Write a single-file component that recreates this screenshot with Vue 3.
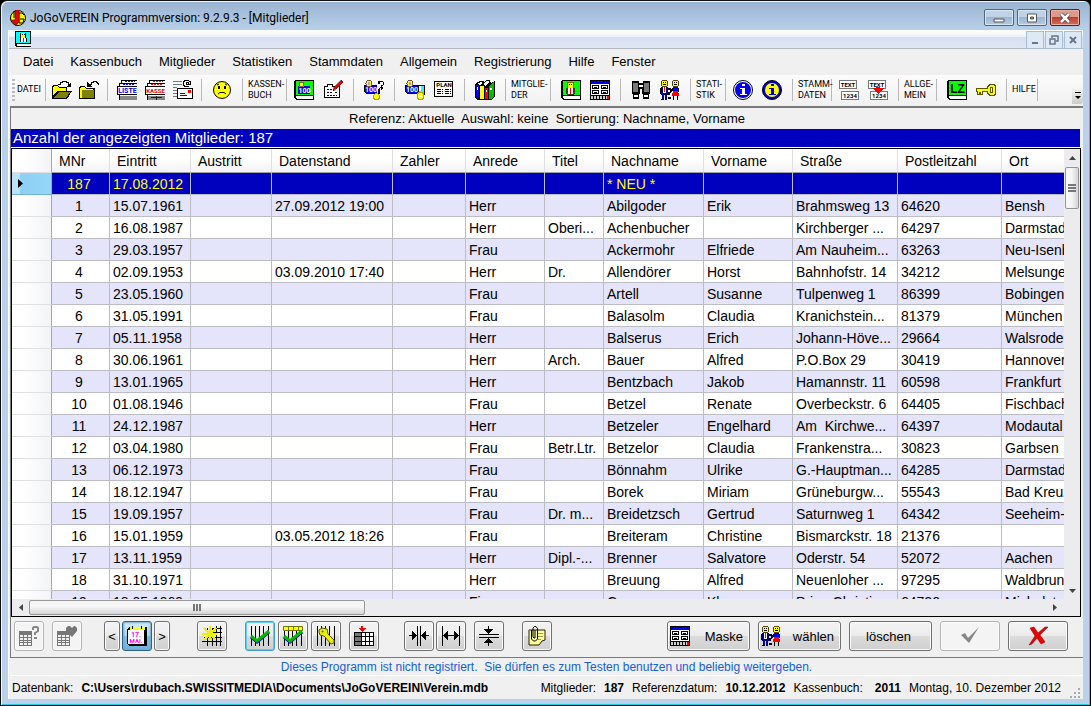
<script setup>
const menus = ['Datei', 'Kassenbuch', 'Mitglieder', 'Statistiken', 'Stammdaten', 'Allgemein', 'Registrierung', 'Hilfe', 'Fenster']

// Toolbar sections, each followed by a divider; width and pitch are in pixels
const tools = [
  { label: ['DATEI'], width: 30, tight: true },
  { icons: ['open', 'close'], width: 61, pitch: 27, tight: true },
  { icons: ['liste', 'kasse', 'mail'], width: 93, pitch: 28 },
  { icons: ['smiley'], width: 40 },
  { label: ['KASSEN-', 'BUCH'], width: 43 },
  { icons: ['cashbook', 'pen'], width: 66, tight: true },
  { icons: ['cashquery'], width: 40 },
  { icons: ['cashcar', 'plan'], width: 69 },
  { icons: ['books'], width: 40 },
  { label: ['MITGLIE-', 'DER'], width: 44 },
  { icons: ['member', 'mask'], width: 69 },
  { icons: ['binoculars', 'people'], width: 69 },
  { label: ['STATI-', 'STIK'], width: 34 },
  { icons: ['info', 'infoyellow'], width: 66, tight: true },
  { label: ['STAMM-', 'DATEN'], width: 38 },
  { icons: ['textnum', 'textarrow'], width: 66, tight: true },
  { label: ['ALLGE-', 'MEIN'], width: 37 },
  { icons: ['lz', 'key'], width: 69 },
  { label: ['HILFE'], width: 30 },
]

const columns = [
  { name: 'MNr', width: 58 },
  { name: 'Eintritt', width: 81 },
  { name: 'Austritt', width: 81 },
  { name: 'Datenstand', width: 121 },
  { name: 'Zahler', width: 73 },
  { name: 'Anrede', width: 79 },
  { name: 'Titel', width: 59 },
  { name: 'Nachname', width: 100 },
  { name: 'Vorname', width: 89 },
  { name: 'Straße', width: 105 },
  { name: 'Postleitzahl', width: 104 },
  { name: 'Ort', width: 120 },
]
const tableWidth = 40 + columns.reduce((sum, c) => sum + c.width, 0)

const rows = [
  ['187', '17.08.2012', '', '', '', '', '', '* NEU *', '', '', '', ''],
  ['1', '15.07.1961', '', '27.09.2012 19:00', '', 'Herr', '', 'Abilgoder', 'Erik', 'Brahmsweg 13', '64620', 'Bensh'],
  ['2', '16.08.1987', '', '', '', 'Herr', 'Oberi...', 'Achenbucher', '', 'Kirchberger ...', '64297', 'Darmstadt'],
  ['3', '29.03.1957', '', '', '', 'Frau', '', 'Ackermohr', 'Elfriede', 'Am Nauheim...', '63263', 'Neu-Isenburg'],
  ['4', '02.09.1953', '', '03.09.2010 17:40', '', 'Herr', 'Dr.', 'Allendörer', 'Horst', 'Bahnhofstr. 14', '34212', 'Melsungen'],
  ['5', '23.05.1960', '', '', '', 'Frau', '', 'Artell', 'Susanne', 'Tulpenweg 1', '86399', 'Bobingen'],
  ['6', '31.05.1991', '', '', '', 'Frau', '', 'Balasolm', 'Claudia', 'Kranichstein...', '81379', 'München'],
  ['7', '05.11.1958', '', '', '', 'Herr', '', 'Balserus', 'Erich', 'Johann-Höve...', '29664', 'Walsrode'],
  ['8', '30.06.1961', '', '', '', 'Herr', 'Arch.', 'Bauer', 'Alfred', 'P.O.Box 29', '30419', 'Hannover'],
  ['9', '13.01.1965', '', '', '', 'Herr', '', 'Bentzbach', 'Jakob', 'Hamannstr. 11', '60598', 'Frankfurt'],
  ['10', '01.08.1946', '', '', '', 'Frau', '', 'Betzel', 'Renate', 'Overbeckstr. 6', '64405', 'Fischbach'],
  ['11', '24.12.1987', '', '', '', 'Herr', '', 'Betzeler', 'Engelhard', 'Am  Kirchwe...', '64397', 'Modautal'],
  ['12', '03.04.1980', '', '', '', 'Frau', 'Betr.Ltr.', 'Betzelor', 'Claudia', 'Frankenstra...', '30823', 'Garbsen'],
  ['13', '06.12.1973', '', '', '', 'Frau', '', 'Bönnahm', 'Ulrike', 'G.-Hauptman...', '64285', 'Darmstadt'],
  ['14', '18.12.1947', '', '', '', 'Frau', '', 'Borek', 'Miriam', 'Grüneburgw...', '55543', 'Bad Kreuznach'],
  ['15', '19.09.1957', '', '', '', 'Frau', 'Dr. m...', 'Breidetzsch', 'Gertrud', 'Saturnweg 1', '64342', 'Seeheim-Jug.'],
  ['16', '15.01.1959', '', '03.05.2012 18:26', '', 'Frau', '', 'Breiteram', 'Christine', 'Bismarckstr. 18', '21376', ''],
  ['17', '13.11.1959', '', '', '', 'Herr', 'Dipl.-...', 'Brenner', 'Salvatore', 'Oderstr. 54', '52072', 'Aachen'],
  ['18', '31.10.1971', '', '', '', 'Herr', '', 'Breuung', 'Alfred', 'Neuenloher ...', '97295', 'Waldbrunn'],
  ['19', '18.05.1969', '', '', '', 'Firma', '', 'Canser', 'Klaus', 'Prinz-Christi...', '64720', 'Michelstadt'],
]

const gridTools = [
  ['star'],
  ['gridcheck', 'gridhead', 'gridkey'],
  ['gridrow'],
  ['narrow', 'wide'],
  ['rowheight'],
  ['clip'],
]
</script>

<template>
  <svg class="defs" aria-hidden="true">
    <symbol id="logo" viewBox="0 0 16 16">
      <circle cx="8" cy="8" r="7.500" fill="#ff0" stroke="#000" />
      <path d="M14 5l-2-2H9v10h4l1-4h-4" fill="none" stroke="#000" />
      <path d="M4 1v7" stroke="#000" />
      <path d="M5 0h4v11l-3 5-5-6h4z" fill="#e00" stroke="#300" stroke-width=".5" />
    </symbol>
    <symbol id="mdi" viewBox="0 0 16 16" shape-rendering="crispEdges">
      <path d="M0 0h16v13H2v2h14v1H1l-1-1z" fill="#000" />
      <path d="M1 1h14v11H1z" fill="#0ff" />
      <path d="M2 13h13v2H2z" fill="#fff" />
      <path d="M5 2h6v5H5zM5 7h7v4H5z" fill="#000" />
      <path d="M6 2h4v5H6z" fill="#ff0" />
      <path d="M7 3h1v1H7zM9 3h1v1H9z" fill="#000" />
      <path d="M6 7h5v4H6z" fill="#fff" />
      <path d="M8 7h1v4H8z" fill="#f00" />
    </symbol>
    <symbol id="open" viewBox="0 0 20 20" shape-rendering="crispEdges">
      <path d="M0 19V6l1-1h4l2 2h8v4h5l-5 8z" fill="#000" />
      <path d="M1 16V7l1-1h3l2 2h7v3H5z" fill="#ff0" />
      <path d="M2 18l5-6h11l-4 6z" fill="#808000" />
      <path d="M6 4.500h2v-2h2v-1h4v1h2v2" fill="none" stroke="#000" />
      <path d="M19 2v5h-5z" fill="#000" />
    </symbol>
    <symbol id="close" viewBox="0 0 20 20" shape-rendering="crispEdges">
      <path d="M0 19V7l1-1h4l2 2h9v11z" fill="#000" />
      <path d="M1 18V8l1-1h3l2 2h7v1H3v8z" fill="#ff0" />
      <path d="M3 10h12v8H3z" fill="#808000" />
      <path d="M11 4.500h1v-2h2v-1h3v1h1v1h1v1" fill="none" stroke="#000" />
      <path d="M8 2v5h5z" fill="#000" />
    </symbol>
    <symbol id="sheets" viewBox="0 0 20 20" shape-rendering="crispEdges">
      <path d="M4 0h16v8H4zM2 3h18v8H2zM0 6h20v9H0z" fill="#000" />
      <path d="M5 1h15v2H5zM3 4h17v2H3zM1 7h19v7H1z" fill="#fff" />
      <path d="M2 15h1v5H2z" fill="#000" /><path d="M3 16h17v4H3z" fill="#888" />
    </symbol>
    <symbol id="liste" viewBox="0 0 20 20" shape-rendering="crispEdges">
      <use href="#sheets" />
      <path d="M8 1.500h10M6 4.500h12" stroke="#00f" stroke-dasharray="2 1" />
      <text x="10.5" y="13" text-anchor="middle" fill="#00e" font-family="Roboto" font-size="7" font-weight="700">LISTE</text>
    </symbol>
    <symbol id="kasse" viewBox="0 0 20 20" shape-rendering="crispEdges">
      <use href="#sheets" />
      <path d="M8 1.500h10M6 4.500h12" stroke="#f00" stroke-dasharray="2 1" />
      <path d="M11.500 16v4M6 17.500h11" stroke="#222" />
      <text x="10.5" y="13" text-anchor="middle" fill="#e00" font-family="Roboto" font-size="6" font-weight="700">KASSE</text>
    </symbol>
    <symbol id="mail" viewBox="0 0 20 20" shape-rendering="crispEdges">
      <path d="M0 1.500h9M0 4.500h9M0 7.500h4M0 10.500h4M0 13.500h4M0 16.500h4" stroke="#777" />
      <path d="M4.500 8.500h15v10h-15z" fill="#fff" stroke="#000" />
      <path d="M15 10h3v3h-3z" fill="#f00" />
      <path d="M7 13.500h5M7 15.500h7" stroke="#00f" />
      <path d="M16 6.500h-4l-1.500-1.500V2L12 .500h3.500L17.500 2v2.500h-2V2.500h-2v2h2" fill="none" stroke="#000" />
    </symbol>
    <symbol id="smiley" viewBox="0 0 20 20">
      <circle cx="10" cy="10" r="8.500" fill="#ff0" stroke="#000" />
      <path d="M6 6h2v3H6zM12 6h2v3h-2z" fill="#000" />
      <path d="M6 14l2-1.500h4l2 1.500" fill="none" stroke="#000" />
      <path d="M5 5l2-1M13 4l2 1" stroke="#000" />
    </symbol>
    <symbol id="cashbook" viewBox="0 0 20 20" shape-rendering="crispEdges">
      <path d="M1 0h19v20H2l-2-2V1z" fill="#000" />
      <path d="M2 1h17v14H2z" fill="#0f0" /><path d="M2 16h17v3H3z" fill="#fff" />
      <path d="M4 6h12v8H4z" fill="#00d" /><path d="M5 2h4v4H5z" fill="#ff0" stroke="#863" />
      <text x="10.500" y="13" text-anchor="middle" fill="#fff" font-family="Roboto" font-size="7" font-weight="700">100</text>
    </symbol>
    <symbol id="pen" viewBox="0 0 20 20" shape-rendering="crispEdges">
      <path d="M1.500 6.500h3v-2h5v2h7v11h-15z" fill="#fff" stroke="#000" />
      <path d="M4 9.500h6M4 12.500h5M4 15.500h10M12 12.500h3" stroke="#000" stroke-dasharray="2 1" />
      <path d="M10 11l1-4 7-7 2 2-7 7z" fill="#e00" stroke="#400" stroke-width=".5" />
    </symbol>
    <symbol id="coach" viewBox="0 0 20 20" shape-rendering="crispEdges">
      <path d="M0 5h13v9H2l-2-2z" fill="#000" /><path d="M1 6h12v7H2l-1-1z" fill="#00e" />
      <circle cx="5" cy="3.500" r="3" fill="#ff0" stroke="#752" />
      <path d="M4 2h2v3H4z" fill="#aaa" />
      <text x="7" y="12" text-anchor="middle" fill="#fff" font-family="Roboto" font-size="7" font-weight="700">100</text>
    </symbol>
    <symbol id="cashquery" viewBox="0 0 20 20" shape-rendering="crispEdges">
      <use href="#coach" />
      <circle cx="12.500" cy="16.500" r="3" fill="#ff0" stroke="#aa0" />
      <path d="M14 1h4l2 2v2l-3 2h2v2l-3 2v3h-2V9l3-2V5l1-1-1-1h-1v1h-2z" fill="#000" />
      <path d="M16 2.500h2v2M16 7.500v3" fill="none" stroke="#fff" />
    </symbol>
    <symbol id="cashcar" viewBox="0 0 20 20" shape-rendering="crispEdges">
      <use href="#coach" />
      <path d="M13 5h7v10h-7z" fill="#000" /><path d="M14 6h5v8h-5z" fill="#3ef" />
      <path d="M14 6h2v5h-2z" fill="#fff" />
      <circle cx="15.500" cy="16" r="3.500" fill="#ff0" stroke="#aa0" />
      <circle cx="15.500" cy="16" r="1.500" fill="#fff" />
    </symbol>
    <symbol id="plan" viewBox="0 0 20 20" shape-rendering="crispEdges">
      <path d="M.5 1.500h18v15H.5z" fill="#fff" stroke="#000" />
      <text x="10" y="7" text-anchor="middle" fill="#000" font-family="Roboto" font-size="6" font-weight="700">PLAN</text>
      <path d="M3 9.500h6M3 11.500h6M3 13.500h6M11 9.500h6M11 11.500h6M11 13.500h6" stroke="#000" stroke-dasharray="4 1" />
    </symbol>
    <symbol id="books" viewBox="0 0 20 20" shape-rendering="crispEdges">
      <path d="M0 4l5-3h3l1 1 3-2h3l1 3 4-2v15l-4 4H2l-2-2z" fill="#000" />
      <path d="M2 4l4-2 2 1-3 2zM8 4l4-3h2v2l-4 3z" fill="#fff" />
      <path d="M1 5h3v13H2l-1-1z" fill="#00e" /><path d="M5 6h4v13H5z" fill="#ff0" />
      <path d="M10 8h3v11h-3z" fill="#f00" /><path d="M14 6l5-4v14l-3 3h-2z" fill="#0b0" />
      <path d="M6 8h1v3H6zM11 10h1v2h-1zM15 8h2v2h-2zM2 7h1v3H2z" fill="#fff" />
    </symbol>
    <symbol id="member" viewBox="0 0 20 20" shape-rendering="crispEdges">
      <path d="M1 0h19v20H2l-2-2V1z" fill="#000" />
      <path d="M2 1h17v14H2z" fill="#0f0" /><path d="M2 16h17v3H3z" fill="#fff" />
      <path d="M6 2h7v6H6z" fill="#860" /><path d="M7 3h5v5H7z" fill="#ff0" />
      <path d="M8 4h1v1H8zM10 4h1v1h-1z" fill="#000" />
      <path d="M5 8h9v6h-1v1H6v-1H5z" fill="#532" /><path d="M7 8h5v6H7z" fill="#fff" /><path d="M9 8h1v6H9z" fill="#f00" />
    </symbol>
    <symbol id="mask" viewBox="0 0 20 20" shape-rendering="crispEdges">
      <path d="M0 0h20v20H0z" fill="#000" /><path d="M1 1h18v3H1z" fill="#00e" /><path d="M1 4h18v11H1z" fill="#fff" />
      <path d="M2.500 5.500h6v3h-6zM11.500 5.500h6v3h-6zM2.500 10.500h6v3h-6zM11.500 10.500h6v3h-6z" fill="#fff" stroke="#000" />
      <path d="M4 7.500h3M13 7.500h3M4 12.500h3M13 12.500h3" stroke="#000" />
      <path d="M1 17.500h17" stroke="#ccc" stroke-width="3" stroke-dasharray="2 1" /><path d="M17 16h2v3h-2z" fill="#f00" />
    </symbol>
    <symbol id="binoculars" viewBox="0 0 20 20" shape-rendering="crispEdges">
      <path d="M1 1h7v2h4V1h7v13h-8V9H9v5H1z" fill="#000" />
      <path d="M2 3h5v9H2zM13 3h5v9h-5z" fill="#777" /><path d="M8 5h4v2H8z" fill="#fff" />
      <path d="M2.500 14.500h5v3h-5zM12.500 14.500h5v3h-5z" fill="#fff" stroke="#000" />
      <path d="M2 18.500h6M12 18.500h6" stroke="#000" />
    </symbol>
    <symbol id="people" viewBox="0 0 20 20" shape-rendering="crispEdges">
      <path d="M2 0h5v1h1v5H7v1H2V6H1V1h1zM13 0h5v1h1v5h-1v1h-5V6h-1V1h1z" fill="#540" />
      <path d="M2 1h5v5H2zM13 1h5v5h-5z" fill="#ff0" />
      <path d="M3 2h1v1H3zM5 2h1v1H5zM14 2h1v1h-1zM16 2h1v1h-1zM3 4h3v1H3zM14 4h3v1h-3z" fill="#000" />
      <path d="M1 7h7v8H7v5H5v-5H4v5H2v-5H1z" fill="#008" />
      <path d="M3 7h3v6H3z" fill="#fff" /><path d="M4 7h1v5H4z" fill="#f00" />
      <path d="M0 8h1v6H0zM1 19h3v1H1z" fill="#000" />
      <path d="M13 7h5v4h-5z" fill="#00e" /><path d="M13 11h5v2h1v3h-7v-3h1z" fill="#f00" />
      <path d="M12 8h1v3h-1zM18 8h1v4h-1zM13 16h1v4h-1zM17 16h1v4h-1z" fill="#000" />
      <path d="M8 8h3v1h1v3h-1v1h-1v2H8v-3h2v-2H8zM8 17h3v2H8z" fill="#000" />
    </symbol>
    <symbol id="info" viewBox="0 0 20 20">
      <circle cx="10" cy="10" r="9.500" fill="#fff" stroke="#000" /><circle cx="10" cy="10" r="8" fill="#00e" />
      <path d="M9 4h3v2H9zM7 8h5v6h2v1H7v-1h2V9H7z" fill="#fff" />
    </symbol>
    <symbol id="infoyellow" viewBox="0 0 20 20">
      <circle cx="10" cy="10" r="9.500" fill="#00c" stroke="#000" />
      <circle cx="10" cy="10" r="7" fill="#ff0" />
      <path d="M9 4h3v2H9zM7 8h5v6h2v1H7v-1h2V9H7z" fill="#00d" />
    </symbol>
    <symbol id="textnum" viewBox="0 0 20 20" shape-rendering="crispEdges">
      <path d="M.5.500h17v8H.5zM2.500 11.500h17v8h-17z" fill="#fff" stroke="#777" />
      <text x="9" y="7" text-anchor="middle" fill="#000" font-family="Roboto" font-size="6" font-weight="700">TEXT</text>
      <text x="11" y="18" text-anchor="middle" fill="#000" font-family="Roboto" font-size="6" font-weight="700">1234</text>
    </symbol>
    <symbol id="textarrow" viewBox="0 0 20 20" shape-rendering="crispEdges">
      <use href="#textnum" />
      <path d="M8 7h4v1h4l-6 6-6-6h4z" fill="#f00" />
    </symbol>
    <symbol id="lz" viewBox="0 0 20 20" shape-rendering="crispEdges">
      <path d="M1 0h19v20H2l-2-2V1z" fill="#000" />
      <path d="M2 1h17v14H2z" fill="#0f0" /><path d="M2 16h17v3H3z" fill="#fff" />
      <text x="10.500" y="13" text-anchor="middle" fill="#000" font-family="Liberation Sans" font-size="12" font-weight="700">LZ</text>
    </symbol>
    <symbol id="key" viewBox="0 0 20 20" shape-rendering="crispEdges">
      <path d="M0 8h11V6l2-2h5l2 2v8l-2 2h-5l-2-2v-2H7v3H1v-3H0z" fill="#550" />
      <path d="M1 9h11V7l2-2h3l2 2v6l-2 2h-3l-2-2v-2H6v3H5v-2H3v2H2v-3H1z" fill="#ff0" />
      <path d="M14 7h3v6h-3z" fill="#550" /><path d="M15 8h1v4h-1z" fill="#fff" />
    </symbol>
    <symbol id="sheet" viewBox="0 0 20 20" shape-rendering="crispEdges">
      <path d="M0 5h13v15H0z" fill="#777" />
      <path d="M1 9h3v2H1zM5 9h3v2H5zM9 9h3v2H9zM1 12h3v2H1zM5 12h3v2H5zM9 12h3v2H9zM1 15h3v1H1zM5 15h3v1H5zM9 15h3v1H9zM1 17h3v2H1zM5 17h3v2H5zM9 17h3v2H9z" fill="#f0f0f0" />
    </symbol>
    <symbol id="tablequery" viewBox="0 0 20 20">
      <use href="#sheet" />
      <path d="M14 4V2l1-1h3l1 1v3l-3 2v2M15 12h3" fill="none" stroke="#888" stroke-width="2" />
    </symbol>
    <symbol id="tableheart" viewBox="0 0 20 20">
      <use href="#sheet" />
      <path d="M15 11L9 5V2l2-2h2l2 2 2-2h1l2 2v3z" fill="#777" />
    </symbol>
    <symbol id="calendar" viewBox="0 0 20 20" shape-rendering="crispEdges">
      <path d="M2 1h18v19H2l-2-2V3z" fill="#000" /><path d="M1 4h16v14H1z" fill="#fff" /><path d="M3 1h15v3H3z" fill="#ff0" />
      <path d="M5.500 0v3M14.500 0v3" stroke="#000" />
      <text x="9" y="11" text-anchor="middle" fill="#f0f" font-family="Roboto" font-size="7" font-weight="700">17.</text>
      <text x="9" y="17" text-anchor="middle" fill="#f0f" font-family="Roboto" font-size="6" font-weight="700">MAI.</text>
    </symbol>
    <symbol id="star" viewBox="0 0 20 20" shape-rendering="crispEdges">
      <path d="M5.500 2v18M10.500 2v18M14.500 0v20M18.500 0v20M10 2.500h10M10 6.500h10M2 11.500h18M0 15.500h20" stroke="#000" />
      <path d="M8 0v15M0 7.500h15M2 2l12 12M14 2L2 14" stroke="#ee0" stroke-width="2" />
    </symbol>
    <symbol id="bars" viewBox="0 0 20 20" shape-rendering="crispEdges">
      <path d="M1.500 0v20M5.500 0v20M9.500 0v20M13.500 0v20M18.500 0v20" stroke="#000" />
    </symbol>
    <symbol id="tick" viewBox="0 0 20 20">
      <path d="M1 11l6 5L19 6" fill="none" stroke="#00c" stroke-width="3" />
      <path d="M1 10l6 5L19 5" fill="none" stroke="#0b0" stroke-width="3" />
    </symbol>
    <symbol id="gridcheck" viewBox="0 0 20 20"><use href="#bars" /><use href="#tick" /></symbol>
    <symbol id="gridhead" viewBox="0 0 20 20">
      <use href="#bars" /><path d="M.5.500h19v4H.5z" fill="#ff0" stroke="#770" /><path d="M5.500 0v5M10.500 0v5M15.500 0v5" stroke="#770" /><use href="#tick" />
    </symbol>
    <symbol id="gridkey" viewBox="0 0 20 20">
      <use href="#bars" />
      <path d="M3 4l3-2 5 1 1 5 6 6v3l-3 1-7-8-4-1-1-3z" fill="#ee0" stroke="#550" /><circle cx="6.500" cy="5.500" r="1" fill="#550" />
    </symbol>
    <symbol id="gridrow" viewBox="0 0 20 20" shape-rendering="crispEdges">
      <path d="M0 6h20v14H0z" fill="#000" />
      <path d="M1 7h6v3H1zM1 11h6v4H1zM1 16h6v3H1z" fill="#777" />
      <path d="M8 7h3v3H8zM12 7h3v3h-3zM16 7h3v3h-3zM8 11h3v4H8zM12 11h3v4h-3zM16 11h3v4h-3zM8 16h3v3H8zM12 16h3v3h-3zM16 16h3v3h-3z" fill="#fff" />
      <path d="M7 0h2v2h3L8 6 4 2h3z" fill="#f00" />
    </symbol>
    <symbol id="narrow" viewBox="0 0 20 20" shape-rendering="crispEdges">
      <path d="M8.500 0v20M11.500 0v20M0 9.500h8M12 9.500h8" stroke="#000" /><path d="M3 5l5 4.500L3 14zM17 5l-5 4.500 5 4.500z" fill="#000" />
    </symbol>
    <symbol id="wide" viewBox="0 0 20 20" shape-rendering="crispEdges">
      <path d="M1.500 0v20M18.500 0v20M2 9.500h16" stroke="#000" /><path d="M7 5L2 9.500 7 14zM13 5l5 4.500-5 4.500z" fill="#000" />
    </symbol>
    <symbol id="rowheight" viewBox="0 0 20 20" shape-rendering="crispEdges">
      <path d="M0 8.500h20M0 11.500h20M9.500 0v8M9.500 12v8" stroke="#000" /><path d="M5 3h9L9.500 8zM5 17h9l-4.500-5z" fill="#000" />
    </symbol>
    <symbol id="clip" viewBox="0 0 20 20">
      <path d="M2 4h16v10l-3 1-3 4H2z" fill="#ff9" stroke="#220" />
      <path d="M11 7.500h5M11 10.500h5M11 13.500h3" stroke="#996" />
      <path d="M4.500 4v9l2 2h2l2-2V2.500L9 .500H7.500L6 2v9l1 1h1V4" fill="none" stroke="#000" />
    </symbol>
    <symbol id="check" viewBox="0 0 20 20"><path d="M1 9l4-2 3 5L19 1 9 17z" fill="#888" /></symbol>
    <symbol id="cross" viewBox="0 0 20 20">
      <path d="M2 2l4-1 4 6 7-6h3l-8 8 5 7-4 2-4-6-5 6-3 1 6-9z" fill="#e00" stroke="#700" stroke-width=".5" />
    </symbol>
  </svg>

  <div class="window">
    <header class="titlebar">
      <svg class="logo"><use href="#logo" /></svg>
      <h1>JoGoVEREIN Programmversion: 9.2.9.3 - [Mitglieder]</h1>
      <div class="winbuttons">
        <button aria-label="Minimieren"><svg viewBox="0 0 12 10"><path d="M1 6h10v3H1z" fill="#fff" stroke="#555" /></svg></button>
        <button aria-label="Maximieren"><svg viewBox="0 0 12 10"><path d="M1.500 1h9v8h-9z" fill="#fff" stroke="#555" /><path d="M4.500 4h3v2h-3z" fill="#89a" stroke="#555" /></svg></button>
        <button class="red" aria-label="Schließen"><svg viewBox="0 0 12 10"><path d="M2 1l8 8M10 1L2 9" stroke="#534" stroke-width="4" /><path d="M2 1l8 8M10 1L2 9" stroke="#fff" stroke-width="2.500" /></svg></button>
      </div>
    </header>

    <div class="client">
      <div class="mdibar">
        <svg class="mdiicon"><use href="#mdi" /></svg>
        <div class="mdibuttons">
          <button aria-label="Fenster minimieren"><svg viewBox="0 0 10 10"><path d="M2 7h6v2H2z" fill="#678" /></svg></button>
          <button aria-label="Fenster wiederherstellen"><svg viewBox="0 0 10 10"><path d="M3 3V1h6v5H7M1 4h5v5H1z" fill="none" stroke="#678" stroke-width="1.500" /></svg></button>
          <button aria-label="Fenster schließen"><svg viewBox="0 0 10 10"><path d="M2 2l6 6M8 2L2 8" stroke="#678" stroke-width="2" /></svg></button>
        </div>
      </div>

      <nav class="menu">
        <button v-for="m in menus" :key="m">{{ m }}</button>
      </nav>

      <div class="toolbar">
        <span class="grip"></span>
        <div v-for="(t, i) in tools" :key="i" class="section" :class="{ tight: t.tight }" :style="{ width: t.width + 'px' }">
          <span v-if="t.label" class="label"><span v-for="l in t.label" :key="l">{{ l }}</span></span>
          <button v-for="icon in t.icons" v-else :key="icon" :aria-label="icon" :style="{ width: (t.pitch || 29) + 'px' }"><svg><use :href="'#' + icon" /></svg></button>
        </div>
        <button class="more" aria-label="Weitere"><svg viewBox="0 0 6 8"><path d="M0 0h6v1H0zM0 4h6L3 7z" /></svg></button>
      </div>

      <main class="panel">
        <p class="reference">Referenz: Aktuelle&nbsp; Auswahl: keine&nbsp; Sortierung: Nachname, Vorname</p>
        <h2 class="count">Anzahl der angezeigten Mitglieder: 187</h2>

        <div class="grid">
          <div class="view">
            <table :style="{ width: tableWidth + 'px' }">
              <colgroup>
                <col class="rowcol" />
                <col v-for="c in columns" :key="c.name" :style="{ width: c.width + 'px' }" />
              </colgroup>
              <thead>
                <tr><th class="rowhead"></th><th v-for="c in columns" :key="c.name">{{ c.name }}</th></tr>
              </thead>
              <tbody>
                <tr v-for="(r, i) in rows" :key="i" :class="{ selected: i === 0 }">
                  <th class="rowhead"><svg v-if="i === 0" viewBox="0 0 5 9"><path d="M0 0l5 4.500L0 9z" /></svg></th>
                  <td v-for="(cell, j) in r" :key="j">{{ cell }}</td>
                </tr>
              </tbody>
            </table>
          </div>
          <div class="vscroll">
            <button aria-label="Nach oben"><svg viewBox="0 0 7 4"><path d="M0 4l3.500-4L7 4z" /></svg></button>
            <div class="thumb"><i></i><i></i><i></i></div>
            <button class="end" aria-label="Nach unten"><svg viewBox="0 0 7 4"><path d="M0 0h7L3.500 4z" /></svg></button>
          </div>
          <div class="hscroll">
            <button aria-label="Nach links"><svg viewBox="0 0 4 7"><path d="M4 0v7L0 3.500z" /></svg></button>
            <div class="thumb"><i></i><i></i><i></i></div>
            <button class="end" aria-label="Nach rechts"><svg viewBox="0 0 4 7"><path d="M0 0v7l4-3.500z" /></svg></button>
          </div>
        </div>

        <div class="actions">
          <div class="cluster first">
            <button class="btn square" disabled aria-label="Tabelle abfragen"><svg><use href="#tablequery" /></svg></button>
            <button class="btn square" disabled aria-label="Tabelle merken"><svg><use href="#tableheart" /></svg></button>
          </div>
          <div class="cluster date">
            <button class="btn step">&lt;</button>
            <button class="btn square pressed" aria-label="Kalender"><svg><use href="#calendar" /></svg></button>
            <button class="btn step">&gt;</button>
          </div>
          <div v-for="g in gridTools" :key="g[0]" class="cluster" :class="g[0]">
            <button v-for="icon in g" :key="icon" class="btn square" :class="{ focus: icon === 'gridcheck' }" :aria-label="icon"><svg><use :href="'#' + icon" /></svg></button>
          </div>
          <div class="cluster commands">
            <button class="btn text"><svg><use href="#mask" /></svg><span>Maske</span></button>
            <button class="btn text"><svg><use href="#people" /></svg><span>wählen</span></button>
            <button class="btn text"><span>löschen</span></button>
            <button class="btn result" disabled aria-label="Übernehmen"><svg><use href="#check" /></svg></button>
            <button class="btn result" aria-label="Abbrechen"><svg><use href="#cross" /></svg></button>
          </div>
        </div>
      </main>

      <p class="notice">Dieses Programm ist nicht registriert.&nbsp; Sie dürfen es zum Testen benutzen und beliebig weitergeben.</p>

      <footer class="status">
        <span>Datenbank:</span><b>C:\Users\rdubach.SWISSITMEDIA\Documents\JoGoVEREIN\Verein.mdb</b>
        <span class="push">Mitglieder:</span><b>187</b>
        <span>Referenzdatum:</span><b>10.12.2012</b>
        <span>Kassenbuch:</span><b class="year">2011</b>
        <span>Montag, 10. Dezember 2012</span>
        <svg class="sizer" viewBox="0 0 12 12"><path d="M9 1h2v2H9zM5 5h2v2H5zM9 5h2v2H9zM1 9h2v2H1zM5 9h2v2H5zM9 9h2v2H9z" fill="#aaa" /></svg>
      </footer>
    </div>
  </div>
</template>

<style>
body { margin: 0; background: #000; }
</style>

<style scoped>
* { box-sizing: border-box; }
button { font: inherit; color: inherit; padding: 0; margin: 0; border: 0; background: none; display: flex; align-items: center; justify-content: center; }
svg { display: block; }
p, h1, h2 { margin: 0; font-weight: 400; }
.defs { display: none; }

.window {
  height: 100vh; display: flex; flex-direction: column; padding: 0 7px 6px;
  border: 1px solid #111; border-right-color: #000; border-radius: 7px 7px 0 0;
  box-shadow: inset 1px 1px #eef5fc, inset -1px -1px #2cc8e8;
  background: linear-gradient(#98b3d0, #bad1ea 30px, #bad1ea);
  font-family: "Liberation Sans", Arial, sans-serif; font-size: 13px; color: #000;
}
.titlebar { height: 29px; flex: none; display: flex; align-items: center; padding: 4px 3px 0 2px; }
.logo { width: 16px; height: 16px; }
h1 { flex: 1; margin-left: 4px; font: 12px Roboto, "Open Sans", sans-serif; white-space: nowrap; }
.winbuttons { display: flex; gap: 3px; }
.winbuttons button { width: 30px; height: 17px; border: 1px solid #53667c; border-radius: 2px; box-shadow: inset 0 0 0 1px #d8e6f4; background: linear-gradient(#c0d2e6 50%, #9db6d0 50%, #b4cbe2); }
.winbuttons .red { border-color: #5b1f1c; box-shadow: inset 0 0 0 1px #eab0a4; background: linear-gradient(#dc9a8c 50%, #bc4030 50%, #d07058); }
.winbuttons svg { width: 12px; height: 10px; }

.client { flex: 1; min-height: 0; display: flex; flex-direction: column; background: #f0f0f0; border-left: 1px solid #fff; }
.mdibar { height: 19px; flex: none; display: flex; justify-content: space-between; padding: 1px 1px 0 6px; border-bottom: 1px solid #b4b9c4; background: linear-gradient(#fff, #eef1f6 7px, #d6def0 7px, #e0e6f4); }
.mdiicon { width: 16px; height: 16px; }
.mdibuttons { display: flex; gap: 1px; }
.mdibuttons button { width: 18px; height: 18px; border: 1px solid #a9bdd4; background: #dfe9f6; }
.mdibuttons svg { width: 10px; height: 10px; }

.menu { height: 26px; flex: none; display: flex; align-items: center; gap: 17px; padding: 0 0 2px 14px; }
.toolbar { height: 31px; flex: none; display: flex; align-items: center; padding: 0 0 2px 3px; background: linear-gradient(#fcfcfc, #f0f0f0); }
.grip { width: 3px; height: 22px; background: repeating-linear-gradient(#bbb 0 2px, transparent 2px 4px); }
.section { flex: none; display: flex; align-items: center; height: 22px; padding-left: 5px; box-shadow: 1px 0 #b8b8b8; margin-right: 1px; }
.section.tight { padding-left: 2px; }
.section button { flex: none; height: 22px; }
.section svg { width: 20px; height: 20px; }
.label { display: flex; flex-direction: column; font: 9px/11px Roboto, sans-serif; white-space: nowrap; }
.more { align-self: flex-end; width: 11px; height: 16px; margin-left: auto; border-radius: 0 0 3px 0; background: linear-gradient(#f4f4f4, #ccc); }
.more svg { width: 6px; height: 8px; }

.panel { flex: 1; min-height: 0; display: flex; flex-direction: column; margin-left: 1px; border: solid #7a7a7a; border-width: 2px 0 1px 1px; }
.reference { flex: none; height: 21px; line-height: 21px; text-align: center; }
.count { flex: none; height: 19px; padding-left: 2px; border-bottom: 1px solid #fff; margin-right: 3px; background: #0000bf; color: #fff; font-size: 15px; line-height: 18px; }

.grid { flex: 1; min-height: 0; margin-right: 2px; display: grid; grid-template-columns: minmax(0, 1fr) 16px; grid-template-rows: minmax(0, 1fr) 17px; border: 1px solid #000; background: #fff; }
.view { overflow: hidden; font-size: 14px; }
table { table-layout: fixed; border-collapse: separate; border-spacing: 0; }
.rowcol { width: 40px; }
th, td { padding: 0 0 0 3px; overflow: hidden; white-space: pre; font-weight: 400; text-align: left; border-right: 1px solid #bcbcc4; border-bottom: 1px solid #bcbcc4; }
thead th { height: 24px; padding-left: 7px; border-right-color: #e0e0e4; border-bottom-color: #a0a0a4; background: linear-gradient(#fff 45%, #f1f2f5); }
td, tbody th { height: 22px; }
tbody tr:nth-child(even) td { background: #e4e4fa; }
td:nth-child(2) { text-align: center; padding: 0 3px 0 0; }
.rowhead { background: linear-gradient(90deg, #fff 25%, #f3f4f7); border-color: #e0e0e4; border-right-color: #a8a8ac; }
.selected td { background: #0000bf; color: #ff0; }
.selected .rowhead { background: linear-gradient(90deg, #bce4f8 20%, #8fd0f4 20%, #94d6f6); border-bottom-color: #70b0d0; }
.rowhead svg { width: 5px; height: 9px; margin-left: 3px; }

.vscroll, .hscroll { display: flex; background: #ececee; }
.vscroll { flex-direction: column; }
.hscroll { grid-column: 1 / -1; padding-right: 17px; }
.vscroll button { width: 16px; height: 17px; }
.hscroll button { width: 17px; height: 16px; }
.vscroll svg { width: 7px; height: 4px; fill: #444; }
.hscroll svg { width: 4px; height: 7px; fill: #444; }
.vscroll .end { margin-top: auto; }
.hscroll .end { margin-left: auto; }
.thumb { display: flex; align-items: center; justify-content: center; border: 1px solid #979797; border-radius: 2px; }
.vscroll .thumb { flex-direction: column; gap: 1px; height: 42px; margin: 1px 1px 0; background: linear-gradient(90deg, #f6f6f6 45%, #d4d4d8); }
.hscroll .thumb { gap: 1px; width: 32%; height: 15px; margin-top: 1px; background: linear-gradient(#f6f6f6 45%, #d4d4d8); }
.vscroll i { width: 8px; height: 2px; background: #777; }
.hscroll i { width: 2px; height: 7px; background: #777; }

.actions { flex: none; height: 40px; display: flex; align-items: center; padding: 0 15px 2px 3px; }
.cluster { display: flex; gap: 2px; }
.cluster.first { gap: 8px; }
.date { margin-left: 22px; }
.star { margin-left: 27px; }
.gridcheck { margin-left: 18px; gap: 3px; }
.gridrow, .rowheight { margin-left: 8px; }
.narrow { margin-left: 25px; }
.clip { margin-left: 18px; }
.commands { margin-left: auto; gap: 8px; }
.btn { height: 30px; border: 1px solid #707070; border-radius: 3px; box-shadow: inset 0 0 0 1px #fbfbfb; background: linear-gradient(#f3f3f3, #ebebeb 50%, #dcdcdc 50%, #cfcfcf); }
.btn svg { width: 20px; height: 20px; }
.btn:disabled { border-color: #b4b4b4; background: #f4f4f4; }
.square { width: 30px; }
.step { width: 16px; }
.pressed { border-color: #2c628b; box-shadow: inset 0 0 2px 1px #7aa7c6; background: linear-gradient(#d8eefb, #a8d8f2 50%, #80bfe4 50%, #70b2dc); }
.focus { border-color: #3c9fcf; box-shadow: inset 0 0 0 1px #5cd0f4; }
.text { width: 83px; padding: 0 6px 0 2px; }
.text span { flex: 1; text-align: center; }
.text svg + span { text-align: right; }
.result { width: 60px; }

.notice { flex: none; height: 18px; margin-left: 1px; border-bottom: 1px solid #fff; text-align: center; font-size: 12px; line-height: 18px; color: #1560d4; }
.status { flex: none; height: 23px; display: flex; align-items: center; gap: 8px; padding: 0 2px 0 3px; font-size: 12px; white-space: nowrap; }
.push { margin-left: auto; }
.year { margin-left: 4px; }
.sizer { width: 12px; height: 12px; align-self: flex-end; }
</style>
